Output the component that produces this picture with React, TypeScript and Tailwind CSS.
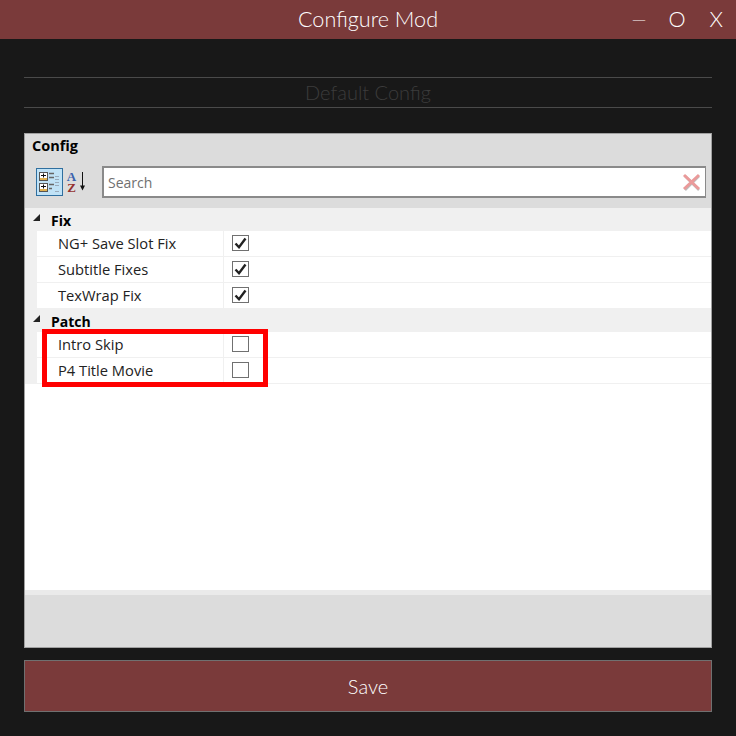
const lato = { fontFamily: '"Lato", "Open Sans", sans-serif' };

interface Setting {
  label: string;
  checked: boolean;
}

const groups: { name: string; items: Setting[] }[] = [
  {
    name: "Fix",
    items: [
      { label: "NG+ Save Slot Fix", checked: true },
      { label: "Subtitle Fixes", checked: true },
      { label: "TexWrap Fix", checked: true },
    ],
  },
  {
    name: "Patch",
    items: [
      { label: "Intro Skip", checked: false },
      { label: "P4 Title Movie", checked: false },
    ],
  },
];

const CategorizedIcon = () => (
  <svg width="27" height="28" viewBox="0 0 27 28" className="block">
    <rect x="0.5" y="0.5" width="26" height="27" fill="#c0e2f6" stroke="#2f6f9f" />
    <rect x="3.5" y="4.5" width="8" height="8" fill="#fff" stroke="#555" />
    <rect x="3.5" y="15.5" width="8" height="8" fill="#fff" stroke="#555" />
    <rect x="4" y="10" width="7" height="2" fill="#e0b050" />
    <rect x="4" y="21" width="7" height="2" fill="#e0b050" />
    <path d="M5 7.5h5M7.5 5.5v4M5 18.5h5M7.5 16.5v4" stroke="#111" fill="none" />
    <path d="M13 5.5h5M13 9.5h5M13 16.5h5M13 20.5h3" stroke="#666" strokeWidth="1.5" fill="none" />
    <path d="M19 8.5h4M19 11.5h4M19 14.5h4M19 17.5h4M19 23.5h4" stroke="#9ab" fill="none" />
  </svg>
);

const SortIcon = () => (
  <svg width="22" height="26" viewBox="0 -2 22 26" className="block">
    <text x="5.5" y="10" textAnchor="middle" fontFamily='"Liberation Serif", serif' fontWeight="700" fontSize="13" fill="#3a62ad">
      A
    </text>
    <text x="5.5" y="20.5" textAnchor="middle" fontFamily='"Liberation Serif", serif' fontWeight="700" fontSize="13" fill="#943030">
      Z
    </text>
    <path d="M16.5 1v15" stroke="#111" fill="none" />
    <path d="M14 14.5h5L16.5 19.5z" fill="#111" />
  </svg>
);

const ClearIcon = () => (
  <svg width="19" height="18" viewBox="0 0 19 18" className="block">
    <path d="M3 3 17 17M17 3 3 17" stroke="#bdbdbd" strokeWidth="2.5" fill="none" />
    <path d="M2 2 17 16M17 2 2 16" stroke="#ea9a9a" strokeWidth="3" fill="none" />
  </svg>
);

const Check = ({ checked }: { checked: boolean }) => (
  <span className="mb-[2px] flex h-[16px] w-[17px] items-center justify-center border border-[#707070] bg-white">
    {checked && (
      <svg width="13" height="12" viewBox="0 0 13 12">
        <path d="M1.5 6.5 5 10.2 11.5 1.5" stroke="#222" strokeWidth="2.4" fill="none" />
      </svg>
    )}
  </span>
);

export default function App() {
  return (
    <div className="flex h-[736px] w-[736px] flex-col bg-[#181818]" style={lato}>
      {/* title bar */}
      <div className="relative flex h-[39px] shrink-0 items-center justify-center bg-[#7a3a3a] text-[21.6px] font-light text-white">
        <span>Configure Mod</span>
        <div className="absolute top-0 right-0 flex h-full items-center font-light">
          <span className="mr-[22px] text-[19px]">—</span>
          <span className="mr-[24px]">O</span>
          <span className="mr-[13px]">X</span>
        </div>
      </div>

      <div className="flex flex-1 flex-col px-6">
        {/* config dropdown */}
        <div className="mt-[38px] flex h-[31px] items-center justify-center border-y border-[#4a4a4a] pb-[2px] text-[20px] font-light text-[#3c3c3c]">
          Default Config
        </div>

        {/* property grid */}
        <div
          className="mt-[25px] flex h-[515px] flex-col border border-[#a0a0a0] bg-[#dcdcdc] text-[14.7px] text-[#222]"
          style={{ fontFamily: '"Open Sans", "Noto Sans", sans-serif' }}
        >
          <div className="pt-[2px] pl-[7px] text-[14.5px] leading-[20px] font-bold text-black">Config</div>
          <div className="mt-[10px] flex items-center pr-[5px] pl-[11px]">
            <CategorizedIcon />
            <span className="ml-[3px]">
              <SortIcon />
            </span>
            <div className="ml-[14px] flex h-[32px] flex-1 items-center justify-between border-2 border-r border-[#8a8a8a] bg-white pr-[4px] pl-[4px] text-[14px] text-[#707070]">
              <span>Search</span>
              <ClearIcon />
            </div>
          </div>

          <div className="relative mt-[10px] flex-1 bg-white">
            {groups.map((g) => (
              <div key={g.name}>
                <div className="flex h-[23px] items-center bg-[#f0f0f0]">
                  <svg width="9" height="9" viewBox="0 0 9 9" className="mb-[5px] ml-[7px] block">
                    <path d="M8 1v7H1z" fill="#222" />
                  </svg>
                  <span className="ml-[10px] pt-[1px] text-[14px] font-bold text-black">{g.name}</span>
                </div>
                <div className="border-l-[12px] border-[#f0f0f0]">
                  {g.items.map((item) => (
                    <div key={item.label} className="flex h-[26px] border-b border-[#f0f0f0]">
                      <div className="flex w-[187px] items-center border-r border-[#f0f0f0] pl-[21px]">
                        {item.label}
                      </div>
                      <div className="flex flex-1 items-center pl-[8px]">
                        <Check checked={item.checked} />
                      </div>
                    </div>
                  ))}
                </div>
              </div>
            ))}
            {/* red highlight box */}
            <div className="absolute top-[121px] left-[17px] h-[58px] w-[226px] border-[5px] border-[#ff0000]" />
          </div>

          {/* description area */}
          <div className="h-[57px] shrink-0 border-t-[5px] border-[#eaeaea] bg-[#dcdcdc]" />
        </div>

        {/* save */}
        <div className="mt-[12px] flex h-[52px] items-center justify-center border border-[#707070] bg-[#7a3a3a] text-[20px] font-light text-white">
          Save
        </div>
      </div>
    </div>
  );
}
